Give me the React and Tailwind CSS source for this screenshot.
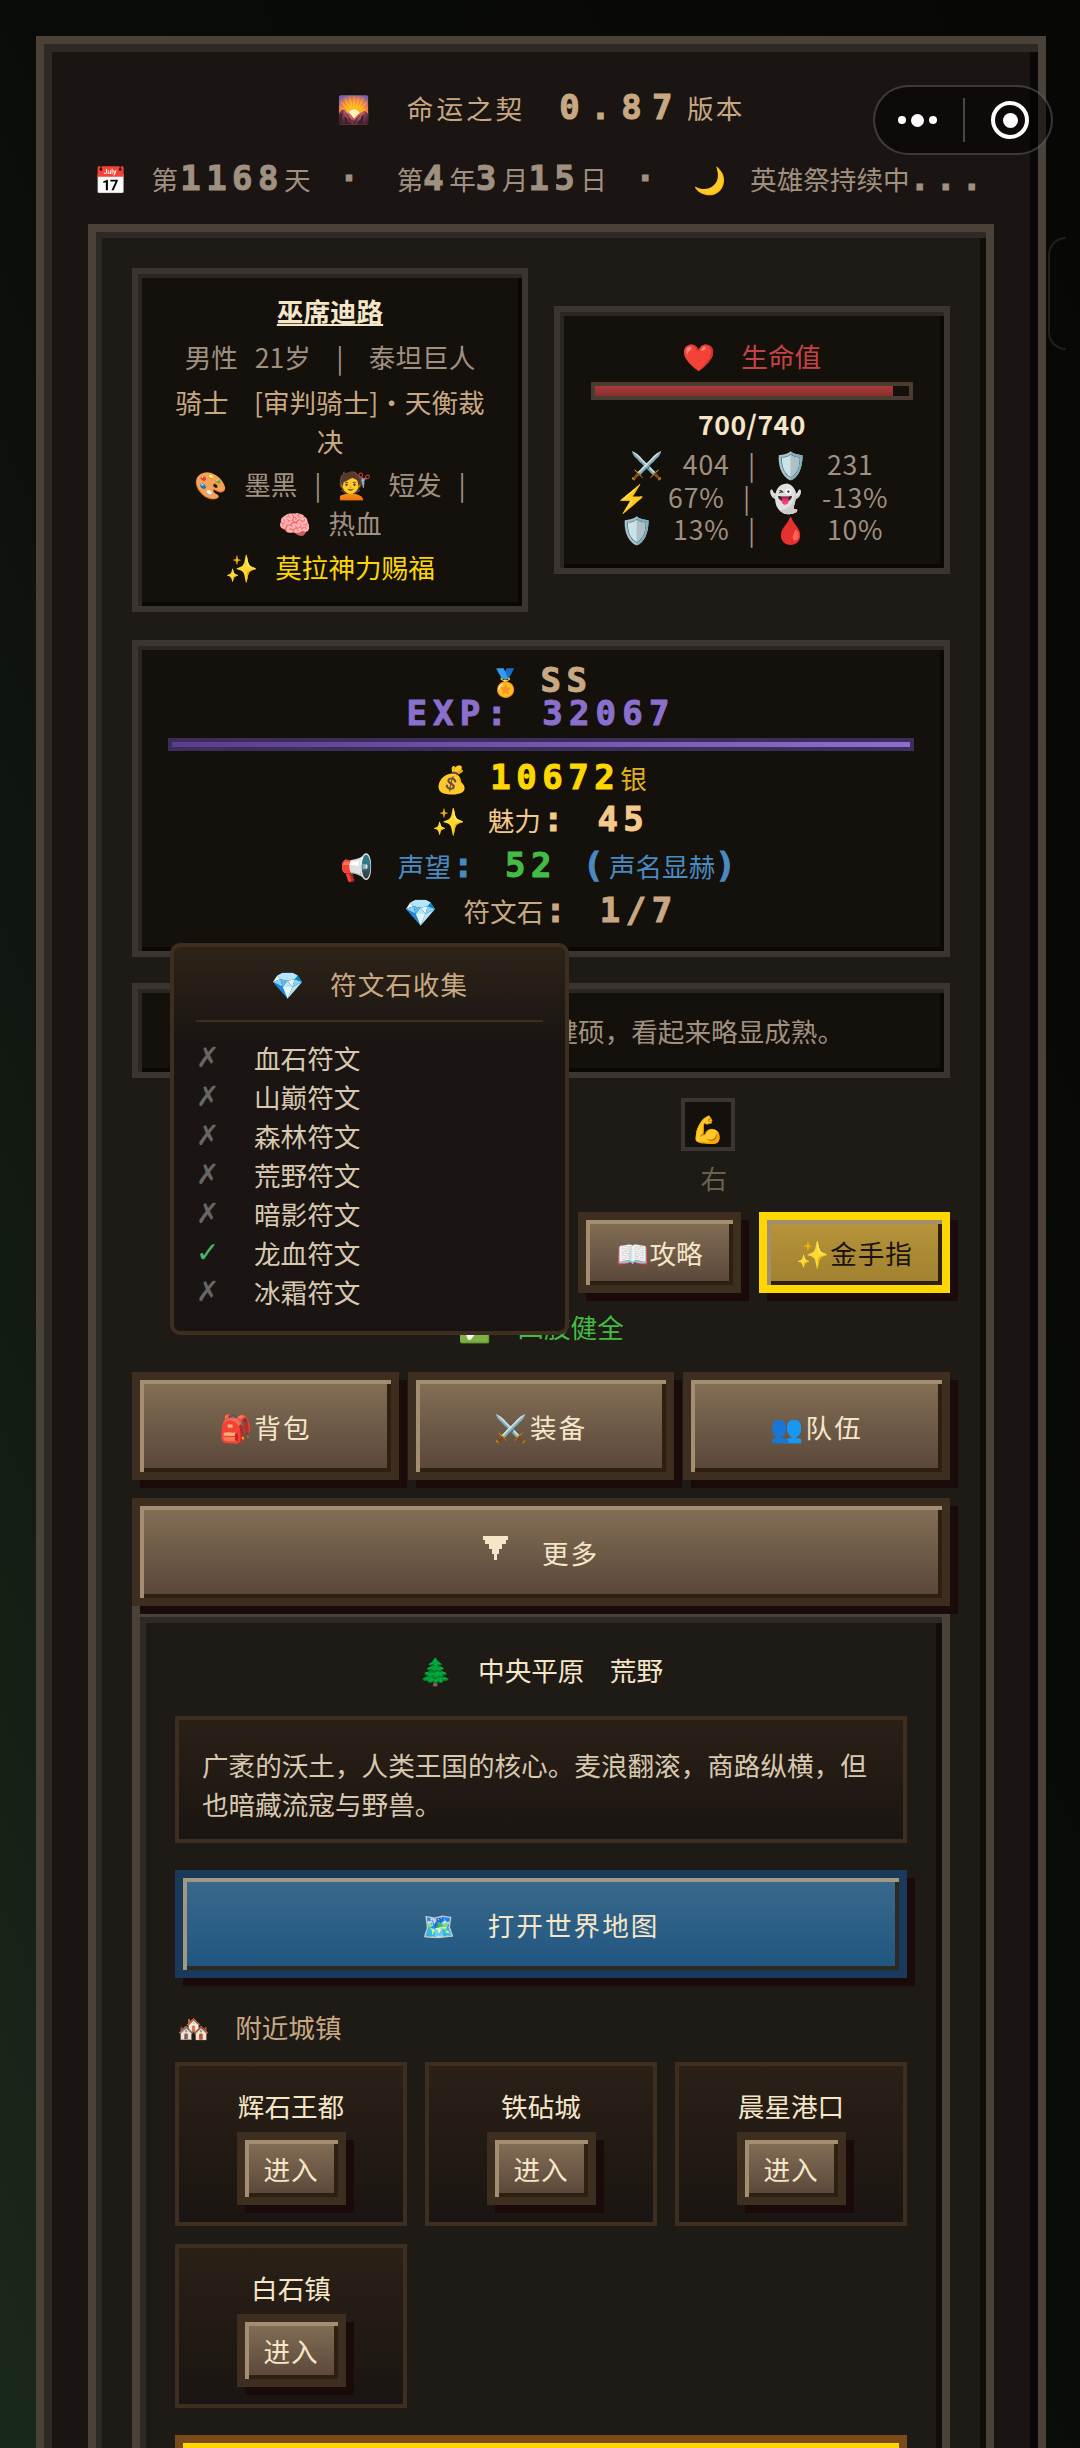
const cjk = "font-['Noto_Sans_CJK_SC','Noto_Color_Emoji',sans-serif]";
const card = "border-[6px] border-[#3a3530] bg-[#14100c] shadow-[inset_4px_4px_0_#2a2722,inset_-4px_-4px_0_#0a0806]";

function Px({ className = "", children }) {
  return (
    <span className={`font-['DejaVu_Sans_Mono','Liberation_Mono',monospace] font-bold text-[34px] tracking-[5.5px] leading-none [-webkit-text-stroke:1px_currentColor] ${className}`}>
      {children}
    </span>
  );
}

function Btn({ className = "", children }) {
  return (
    <div className={`flex items-center justify-center border-8 border-[#3d2e1f] bg-linear-to-b from-[#847055] to-[#59463a] shadow-[8px_8px_0_#1a0a0a,inset_4px_4px_0_#a38e72,inset_-4px_-4px_0_#2d2010] text-[#f5e6c8] ${className}`}>
      {children}
    </div>
  );
}

function Town({ name }) {
  return (
    <div className="flex h-[164px] flex-col items-center border-4 border-[#3d2e1f] bg-linear-to-b from-[#2a2016] to-[#1a1512] pt-[20px]">
      <div className="leading-[40px] text-[#f5e6c8]">{name}</div>
      <Btn className="mt-[6px] h-[73px] w-[109px] tracking-[1px]">进入</Btn>
    </div>
  );
}

const runes = [
  ["血石符文", false],
  ["山巅符文", false],
  ["森林符文", false],
  ["荒野符文", false],
  ["暗影符文", false],
  ["龙血符文", true],
  ["冰霜符文", false],
];

function RunePopup() {
  return (
    <div className="absolute left-[170px] top-[943px] z-20 h-[392px] w-[399px] rounded-[10px] border-4 border-[#3d2e1f] bg-linear-to-b from-[#2d2318] to-[#1a1512] to-[25%] px-[22px]">
      <div className="flex h-[75px] items-center justify-center gap-[26px] border-b-2 border-[#3d2e1f] text-[#c8a882]">
        <span>💎</span>
        <span className="tracking-[1px]">符文石收集</span>
      </div>
      <div className="mt-[16px] flex flex-col">
        {runes.map(([name, got]) => (
          <div key={name} className="flex h-[39px] items-center">
            <span className={`w-[58px] font-['DejaVu_Sans',sans-serif] text-[28px] ${got ? "text-[#44bb66]" : "text-[#666666]"}`}>
              {got ? "✓" : "✗"}
            </span>
            <span className="text-[#d8c8b0]">{name}</span>
          </div>
        ))}
      </div>
    </div>
  );
}

export default function App() {
  return (
    <div className={`relative h-[2448px] w-[1080px] overflow-hidden bg-linear-to-tr from-[#1a2a1a] via-[#0a0c0a] to-[#070806] pl-9 pr-[34px] pt-9 text-[26.6px] leading-[39px] [word-spacing:2.5px] ${cjk}`}>
      {/* capsule */}
      <div className="absolute left-[873px] top-[85px] z-30 flex h-[70px] w-[180px] items-center rounded-full border-2 border-white/20 bg-black/50 pl-[23px]">
        <div className="flex items-center gap-[5px]">
          <span className="size-2 rounded-full bg-white" />
          <span className="size-[13px] rounded-full bg-white" />
          <span className="size-2 rounded-full bg-white" />
        </div>
        <span className="ml-[26px] h-[44px] w-0.5 bg-white/25" />
        <span className="ml-[26px] flex size-[38px] items-center justify-center rounded-full border-[4px] border-white">
          <span className="size-[15px] rounded-full bg-white" />
        </span>
      </div>
      <div className="absolute left-[1048px] top-[237px] h-[113px] w-[18px] rounded-l-[24px] border-2 border-r-0 border-white/10" />

      <RunePopup />

      <div className="h-[2500px] border-8 border-[#4a4238] bg-[#1a1512] px-[44px] pt-[38px] shadow-[inset_8px_8px_0_#2d2a26,inset_-8px_0_0_#0a0806]">
        {/* title */}
        <div className="flex h-[50px] items-center justify-center gap-[36px] text-[#c8a882]">
          <span>🌄</span>
          <div className="flex items-center gap-[34px]">
            <span className="tracking-[3px]">命运之契</span>
            <span className="flex items-center gap-[4px]">
              <Px className="tracking-[10.5px]">0.87</Px>
              <span className="tracking-[2px]">版本</span>
            </span>
          </div>
        </div>
        {/* date */}
        <div className="mt-[24px] flex h-[44px] items-center justify-center whitespace-nowrap text-[#a09080]">
          <span className="mr-[24px]">📅</span>
          <span>第</span>
          <Px className="ml-0.5">1168</Px>
          <span>天</span>
          <Px className="ml-[28px] mr-[32px]">·</Px>
          <span>第</span>
          <Px>4</Px>
          <span>年</span>
          <Px>3</Px>
          <span>月</span>
          <Px>15</Px>
          <span>日</span>
          <Px className="ml-[28px] mr-[32px]">·</Px>
          <span className="mr-[24px]">🌙</span>
          <span>英雄祭持续中</span>
          <Px>...</Px>
        </div>

        {/* main panel */}
        <div className="mt-[24px] h-[2400px] border-8 border-[#4a4238] bg-[#1e1a15] px-[36px] pt-[36px] shadow-[inset_6px_6px_0_#2d2a26,inset_-6px_0_0_#0f0c0a]">
          <div className="flex items-center gap-[26px]">
            <div className={`h-[344px] w-[396px] px-[30px] pt-[17px] text-center text-[#a09080] ${card}`}>
              <div className="font-bold text-[#f5e6c8] underline">巫席迪路</div>
              <div className="mt-[7px]">男性&nbsp;&nbsp;21岁&nbsp;&nbsp;&nbsp;|&nbsp;&nbsp;&nbsp;泰坦巨人</div>
              <div className="mt-[6px] text-[#c8a882]">骑士&nbsp;&nbsp;&nbsp;[审判骑士]·天衡裁决</div>
              <div className="mt-[4px]">🎨&nbsp;&nbsp;墨黑&nbsp;&nbsp;|&nbsp;&nbsp;💇&nbsp;&nbsp;短发&nbsp;&nbsp;| 🧠&nbsp;&nbsp;热血</div>
              <div className="mt-[5px] text-[#ffd700]">✨&nbsp;&nbsp;莫拉神力赐福</div>
            </div>
            <div className={`h-[268px] w-[396px] pt-[24px] text-center ${card}`}>
              <div className="text-[#c44444]">❤️&nbsp;&nbsp;&nbsp;生命值</div>
              <div className="mx-[31px] mt-[7px] h-[18px] border-4 border-[#4a3c30] bg-[#14100c]">
                <div className="h-full w-[95%] bg-linear-to-b from-[#a83a3a] to-[#8a2e2e]" />
              </div>
              <div className="mt-[4px] font-bold tracking-[0.5px] text-[#f5e6c8]">700/740</div>
              <div className="mt-[5px] leading-[32.5px] tracking-[0.8px] text-[#a09080]">
                <div>⚔️&nbsp;&nbsp;404&nbsp;&nbsp;|&nbsp;&nbsp;🛡️&nbsp;&nbsp;231</div>
                <div>⚡&nbsp;&nbsp;67%&nbsp;&nbsp;|&nbsp;&nbsp;👻&nbsp;&nbsp;-13%</div>
                <div>🛡️&nbsp;&nbsp;13%&nbsp;&nbsp;|&nbsp;&nbsp;🩸&nbsp;&nbsp;10%</div>
              </div>
            </div>
          </div>

          {/* stats */}
          <div className={`mt-[28px] h-[317px] px-[30px] pt-[19px] text-center ${card}`}>
            <div className="flex h-[30px] items-center justify-center gap-[18px]">
              <span>🏅</span>
              <Px className="text-[#c8a882]">SS</Px>
            </div>
            <Px className="mt-px block tracking-[6.2px] text-[#8a70cc]">EXP: 32067</Px>
            <div className="mt-[8px] h-[13px] border-4 border-[#3d2d5c] bg-[#3d2d5c]">
              <div className="h-full bg-linear-to-r from-[#5a3d8c] to-[#8a70cc]" />
            </div>
            <div className="mt-[4px] flex h-[44px] items-center justify-center text-[#ffd700]">
              <span className="mr-[22px]">💰</span>
              <Px>10672</Px>
              <span className="text-[#e0b020]">银</span>
            </div>
            <div className="flex h-[40px] items-center justify-center text-[#f5c98a]">
              <span className="mr-[22px]">✨</span>
              <span>魅力</span>
              <Px className="ml-0.5">: 45</Px>
            </div>
            <div className="mt-[3px] flex h-[46px] items-center justify-center text-[#4a8ac0]">
              <span className="mr-[24px]">📢</span>
              <span>声望</span>
              <Px className="ml-0.5">:</Px>
              <Px className="ml-[26px] text-[#44bb44]">52</Px>
              <Px className="ml-[26px]">(</Px>
              <span>声名显赫</span>
              <Px>)</Px>
            </div>
            <div className="flex h-[44px] items-center justify-center text-[#c8a882]">
              <span className="mr-[26px]">💎</span>
              <span>符文石</span>
              <Px className="ml-0.5">: 1/7</Px>
            </div>
          </div>

          {/* description */}
          <div className={`mt-[26px] flex h-[95px] items-center justify-end pr-[100px] text-[#a09080] ${card}`}>
            健硕，看起来略显成熟。
          </div>

          {/* limbs */}
          <div className="mt-[20px] flex flex-col items-end pr-[215px]">
            <div className="flex h-[53px] w-[54px] items-end justify-center border-4 border-[#3a3530] bg-[#14100c]">
              <span className="leading-[38px]">💪</span>
            </div>
            <div className="mr-[8px] mt-[7px] text-[#6a6050]">右</div>
          </div>

          <div className="mt-[15px] flex justify-end gap-[18px]">
            <Btn className="h-[81px] w-[163px] whitespace-nowrap">📖攻略</Btn>
            <div className="flex h-[81px] w-[191px] items-center justify-center whitespace-nowrap border-8 border-[#ffd700] bg-linear-to-b from-[#b8953a] to-[#a08030] tracking-[1px] text-[#1a1512] shadow-[8px_8px_0_#1a0a0a,inset_4px_4px_0_#a38e72,inset_-4px_-4px_0_#2d2010]">
              ✨金手指
            </div>
          </div>

          <div className="mt-[14px] flex h-[39px] items-center justify-center gap-[26px] text-[#44bb44]">
            <span>✅</span>
            <span>四肢健全</span>
          </div>

          {/* menu */}
          <div className="mt-[26px] grid grid-cols-3 gap-[9px]">
            <Btn className="relative z-10 h-[108px] tracking-[2px]">🎒背包</Btn>
            <Btn className="relative z-10 h-[108px] tracking-[2px]">⚔️装备</Btn>
            <Btn className="relative z-10 h-[108px] tracking-[2px]">👥队伍</Btn>
          </div>
          <Btn className="relative z-10 mt-[18px] h-[108px] gap-[34px]">
            <svg width="25" height="24" viewBox="0 0 25 24" className="-mt-2" fill="#f5e6c8">
              <path d="M0 0h25v4h-2v4h-4v5h-3v5h-2v6h-3v-6H9v-5H6V8H2V4H0z" />
            </svg>
            <span className="tracking-[2px]">更多</span>
          </Btn>

          {/* location panel */}
          <div className="h-[900px] border-8 border-t-[11px] border-[#4a4238] bg-[#1e1a15] px-[35px] pt-[32px] shadow-[inset_6px_6px_0_#2d2a26,inset_-6px_0_0_#0f0c0a]">
            <div className="flex h-[40px] items-center justify-center gap-[26px] text-[#f5e6c8]">
              <span>🌲</span>
              <span>中央平原&nbsp;&nbsp;&nbsp;荒野</span>
            </div>
            <div className="mt-[27px] h-[127px] border-4 border-[#3d2e1f] bg-linear-to-b from-[#2a2016] to-[#1a1512] px-[23px] pt-[25px] text-[#d8c8b0]">
              广袤的沃土，人类王国的核心。麦浪翻滚，商路纵横，但也暗藏流寇与野兽。
            </div>
            <div className="mt-[27px] flex h-[108px] items-center justify-center gap-[32px] border-8 border-[#1a3a5c] bg-linear-to-b from-[#3a6a8c] to-[#1f5580] text-[#f5e6c8] shadow-[8px_8px_0_#1a0a0a,inset_4px_4px_0_#a09880,inset_-4px_-4px_0_#2a2a20]">
              <span>🗺️</span>
              <span className="tracking-[2px]">打开世界地图</span>
            </div>
            <div className="mt-[28px] flex h-[40px] items-center gap-[25px] pl-[2px] text-[#c8a882]">
              <span>🏘️</span>
              <span>附近城镇</span>
            </div>
            <div className="mt-[16px] grid grid-cols-3 gap-[18px]">
              <Town name="辉石王都" />
              <Town name="铁砧城" />
              <Town name="晨星港口" />
              <Town name="白石镇" />
            </div>
            <div className="mt-[27px] h-[108px] border-8 border-[#7a4a1a] bg-linear-to-b from-[#ffd700] to-[#c8a020]" />
          </div>
        </div>
      </div>
    </div>
  );
}
